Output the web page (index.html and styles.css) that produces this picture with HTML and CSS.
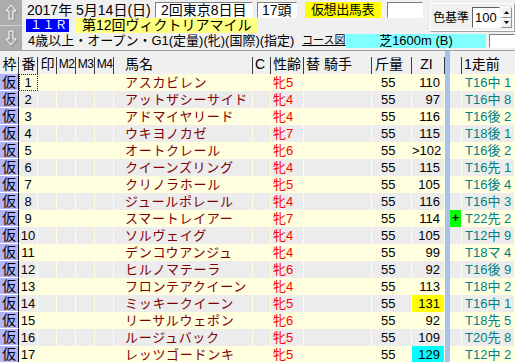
FILE: index.html
```html
<!DOCTYPE html>
<html lang="ja">

<head>
	<meta charset="utf-8">
	<title>仮想出馬表</title>
	<link rel="stylesheet" href="styles.css">
</head>

<body>
	<div id="raceHeader">
		<div class="navButtons">
			<div class="navButton">
				<svg width="14" height="18" viewBox="0 0 14 18">
					<polygon class="arrowShade" points="8,3 13,9 10,9 10,17 6,17 6,9 3,9" />
					<polygon class="arrowEdge" points="7,2 12,8 9,8 9,16 5,16 5,8 2,8" />
				</svg>
			</div>
			<div class="navButton">
				<svg width="14" height="18" viewBox="0 0 14 18">
					<polygon class="arrowShade" points="8,17 13,11 10,11 10,3 6,3 6,11 3,11" />
					<polygon class="arrowEdge" points="7,16 12,10 9,10 9,2 5,2 5,10 2,10" />
				</svg>
			</div>
		</div>
		<div class="raceInfo">
			<div class="infoRow">
				<span class="raceDate">2017年 5月14日(日)</span>
				<span class="box sunken meeting">2回東京8日目</span>
				<span class="box sunken runners">17頭</span>
				<span class="box sheetTitle">仮想出馬表</span>
				<span class="box sunken blank"></span>
			</div>
			<div class="colorPanel">
				<span class="colorLabel">色基準</span>
				<span class="spinValue">100</span>
				<span class="spinButtons">
					<span class="spinButton"><svg width="5" height="3" viewBox="0 0 5 3"><polygon points="2.5,0 5,3 0,3" /></svg></span>
					<span class="spinButton"><svg width="5" height="3" viewBox="0 0 5 3"><polygon points="0,0 5,0 2.5,3" /></svg></span>
				</span>
			</div>
			<div class="infoRow">
				<span class="raceNo">１１Ｒ</span>
				<span class="raceName">第12回ヴィクトリアマイル</span>
			</div>
			<div class="infoRow wide">
				<span class="conditions">4歳以上・オープン・G1(定量)(牝)(国際)(指定)</span>
				<a class="courseLink">コース図</a>
				<span class="course">芝1600m (B)</span>
				<span class="box sunken blankSmall"></span>
			</div>
		</div>
	</div>

	<div id="entryTable">
		<div class="row headRow">
			<span>枠</span><span>番</span><span>印</span><span class="mCol">M2</span><span class="mCol">M3</span><span class="mCol">M4</span>
			<span class="name">馬名</span><span class="cCol">C</span><span class="sexAge">性齢</span><span class="jockey">替 騎手</span>
			<span class="weight">斤量</span><span class="ziHead">ZI</span><span class="bar"></span><span class="mark"></span><span class="last">1走前</span>
		</div>

		<div class="row odd">
			<span class="waku">仮</span><span class="num focused">1</span><span></span><span></span><span></span><span></span>
			<span class="name">アスカビレン</span><span></span><span class="sexAge">牝5</span><span></span>
			<span class="weight">55</span><span class="zi">110</span><span class="bar"></span><span class="mark"></span><span class="last">T16中 1</span>
		</div>
		<div class="row even">
			<span class="waku">仮</span><span class="num">2</span><span></span><span></span><span></span><span></span>
			<span class="name">アットザシーサイド</span><span></span><span class="sexAge">牝4</span><span></span>
			<span class="weight">55</span><span class="zi">97</span><span class="bar"></span><span class="mark"></span><span class="last">T16中 8</span>
		</div>
		<div class="row odd">
			<span class="waku">仮</span><span class="num">3</span><span></span><span></span><span></span><span></span>
			<span class="name">アドマイヤリード</span><span></span><span class="sexAge">牝4</span><span></span>
			<span class="weight">55</span><span class="zi">116</span><span class="bar"></span><span class="mark"></span><span class="last">T16後 2</span>
		</div>
		<div class="row even">
			<span class="waku">仮</span><span class="num">4</span><span></span><span></span><span></span><span></span>
			<span class="name">ウキヨノカゼ</span><span></span><span class="sexAge">牝7</span><span></span>
			<span class="weight">55</span><span class="zi">115</span><span class="bar"></span><span class="mark"></span><span class="last">T18後 1</span>
		</div>
		<div class="row odd">
			<span class="waku">仮</span><span class="num">5</span><span></span><span></span><span></span><span></span>
			<span class="name">オートクレール</span><span></span><span class="sexAge">牝6</span><span></span>
			<span class="weight">55</span><span class="zi">&gt;102</span><span class="bar"></span><span class="mark"></span><span class="last">T16後 2</span>
		</div>
		<div class="row even">
			<span class="waku">仮</span><span class="num">6</span><span></span><span></span><span></span><span></span>
			<span class="name">クイーンズリング</span><span></span><span class="sexAge">牝4</span><span></span>
			<span class="weight">55</span><span class="zi">115</span><span class="bar"></span><span class="mark"></span><span class="last">T16先 1</span>
		</div>
		<div class="row odd">
			<span class="waku">仮</span><span class="num">7</span><span></span><span></span><span></span><span></span>
			<span class="name">クリノラホール</span><span></span><span class="sexAge">牝5</span><span></span>
			<span class="weight">55</span><span class="zi">105</span><span class="bar"></span><span class="mark"></span><span class="last">T16後 4</span>
		</div>
		<div class="row even">
			<span class="waku">仮</span><span class="num">8</span><span></span><span></span><span></span><span></span>
			<span class="name">ジュールポレール</span><span></span><span class="sexAge">牝4</span><span></span>
			<span class="weight">55</span><span class="zi">116</span><span class="bar"></span><span class="mark"></span><span class="last">T16中 3</span>
		</div>
		<div class="row odd">
			<span class="waku">仮</span><span class="num">9</span><span></span><span></span><span></span><span></span>
			<span class="name">スマートレイアー</span><span></span><span class="sexAge">牝7</span><span></span>
			<span class="weight">55</span><span class="zi">114</span><span class="bar"></span><span class="mark plus">+</span><span class="last">T22先 2</span>
		</div>
		<div class="row even">
			<span class="waku">仮</span><span class="num">10</span><span></span><span></span><span></span><span></span>
			<span class="name">ソルヴェイグ</span><span></span><span class="sexAge">牝4</span><span></span>
			<span class="weight">55</span><span class="zi">105</span><span class="bar"></span><span class="mark"></span><span class="last">T12中 9</span>
		</div>
		<div class="row odd">
			<span class="waku">仮</span><span class="num">11</span><span></span><span></span><span></span><span></span>
			<span class="name">デンコウアンジュ</span><span></span><span class="sexAge">牝4</span><span></span>
			<span class="weight">55</span><span class="zi">99</span><span class="bar"></span><span class="mark"></span><span class="last">T18マ 4</span>
		</div>
		<div class="row even">
			<span class="waku">仮</span><span class="num">12</span><span></span><span></span><span></span><span></span>
			<span class="name">ヒルノマテーラ</span><span></span><span class="sexAge">牝6</span><span></span>
			<span class="weight">55</span><span class="zi">92</span><span class="bar"></span><span class="mark"></span><span class="last">T16後 9</span>
		</div>
		<div class="row odd">
			<span class="waku">仮</span><span class="num">13</span><span></span><span></span><span></span><span></span>
			<span class="name">フロンテアクイーン</span><span></span><span class="sexAge">牝4</span><span></span>
			<span class="weight">55</span><span class="zi">113</span><span class="bar"></span><span class="mark"></span><span class="last">T18中 2</span>
		</div>
		<div class="row even">
			<span class="waku">仮</span><span class="num">14</span><span></span><span></span><span></span><span></span>
			<span class="name">ミッキークイーン</span><span></span><span class="sexAge">牝5</span><span></span>
			<span class="weight">55</span><span class="zi topYellow">131</span><span class="bar"></span><span class="mark"></span><span class="last">T16中 1</span>
		</div>
		<div class="row odd">
			<span class="waku">仮</span><span class="num">15</span><span></span><span></span><span></span><span></span>
			<span class="name">リーサルウェポン</span><span></span><span class="sexAge">牝6</span><span></span>
			<span class="weight">55</span><span class="zi">92</span><span class="bar"></span><span class="mark"></span><span class="last">T18先 5</span>
		</div>
		<div class="row even">
			<span class="waku">仮</span><span class="num">16</span><span></span><span></span><span></span><span></span>
			<span class="name">ルージュバック</span><span></span><span class="sexAge">牝5</span><span></span>
			<span class="weight">55</span><span class="zi">109</span><span class="bar"></span><span class="mark"></span><span class="last">T20先 8</span>
		</div>
		<div class="row odd">
			<span class="waku">仮</span><span class="num">17</span><span></span><span></span><span></span><span></span>
			<span class="name">レッツゴードンキ</span><span></span><span class="sexAge">牝5</span><span></span>
			<span class="weight">55</span><span class="zi topCyan">129</span><span class="bar"></span><span class="mark"></span><span class="last">T12中 2</span>
		</div>
	</div>
</body>

</html>
```

FILE: styles.css
```css
html,
body {
	margin: 0;
	overflow: hidden;
}

body {
	width: 515px;
	background: #f0f0f0;
	color: #000;
	font-family: "Liberation Sans", "Noto Sans CJK JP", sans-serif;
}

/* top panel */

#raceHeader {
	display: flex;
	height: 50px;
	border-bottom: 1px solid #a0a0a0;
}

.navButtons {
	width: 22px;
	display: flex;
	flex-direction: column;
}

.navButton {
	flex: 1;
	display: flex;
	align-items: center;
	justify-content: center;
	background: #acacac;
}

.navButton + .navButton {
	border-top: 1px solid #d4d4d4;
}

.arrowEdge {
	fill: none;
	stroke: #fff;
	stroke-width: 1;
}

.arrowShade {
	fill: none;
	stroke: #888;
	stroke-width: 1;
}

.raceInfo {
	flex: 1;
	margin-left: 4px;
	padding-top: 1px;
	display: grid;
	grid-template-columns: 404px 1fr;
	grid-template-rows: 17px 15px 15px;
}

.infoRow {
	display: flex;
	align-items: center;
	white-space: nowrap;
}

.infoRow.wide {
	grid-column: 1 / 3;
}

.box {
	box-sizing: border-box;
	height: 16px;
	line-height: 14px;
	font-size: 14px;
	border: 1px solid transparent;
}

.sunken {
	background: #fff;
	border-color: #808080 #fff #fff #808080;
}

.raceDate {
	width: 128px;
	margin-left: 1px;
	font-size: 14px;
	line-height: 16px;
}

.meeting {
	width: 98px;
	padding-left: 5px;
}

.runners {
	width: 40px;
	margin-left: 4px;
	padding-left: 4px;
}

.sheetTitle {
	width: 76px;
	margin-left: 8px;
	padding-left: 5px;
	background: #ffff00;
	font-size: 13px;
	letter-spacing: -0.4px;
}

.blank {
	width: 36px;
	margin-left: 6px;
}

.colorPanel {
	grid-column: 2;
	grid-row: 1 / 3;
	margin: 2px 0 1px 0;
	display: flex;
	align-items: center;
	white-space: nowrap;
	border: 1px solid;
	border-color: #fff #a0a0a0 #a0a0a0 #fff;
	box-shadow: inset -1px -1px 0 #fff;
}

.colorLabel {
	flex-shrink: 0;
	margin-left: 2px;
	font-size: 12px;
	line-height: 14px;
}

.spinValue {
	flex-shrink: 0;
	box-sizing: border-box;
	width: 28px;
	height: 21px;
	margin-left: 3px;
	padding-left: 2px;
	background: #fff;
	border: 1px solid;
	border-color: #606060 #fff #fff #606060;
	font-size: 13px;
	line-height: 19px;
}

.spinButtons {
	flex-shrink: 0;
	display: flex;
	flex-direction: column;
	height: 21px;
	margin-left: 1px;
}

.spinButton {
	flex: 1;
	box-sizing: border-box;
	width: 11px;
	display: flex;
	align-items: center;
	justify-content: center;
	border: 1px solid;
	border-color: #fff #909090 #909090 #fff;
	fill: #000;
}

.raceNo {
	box-sizing: border-box;
	width: 43px;
	height: 13px;
	padding-left: 4px;
	background: #0000ff;
	color: #fff;
	font-size: 12px;
	line-height: 13px;
	letter-spacing: 0.5px;
}

.raceName {
	box-sizing: border-box;
	width: 183px;
	height: 15px;
	margin-left: 6px;
	padding-left: 7px;
	background: #ffff80;
	font-size: 14px;
	line-height: 15px;
}

.conditions {
	width: 274px;
	margin-left: 2px;
	font-size: 13px;
	line-height: 14px;
}

.courseLink {
	width: 44px;
	font-size: 11px;
	line-height: 13px;
	text-decoration: underline;
}

.course {
	width: 140px;
	height: 14px;
	background: #80ffff;
	text-align: center;
	font-size: 13px;
	line-height: 14px;
}

.blankSmall {
	width: 26px;
	height: 14px;
	margin-left: 3px;
}

/* entry grid */

.row {
	display: grid;
	grid-template-columns: 19px 19px 19px 19px 19px 19px 139px 18px 33px 68px 40px 33px 5px 12px 53px;
	height: 17px;
}

.row span {
	box-sizing: border-box;
	height: 17px;
	overflow: hidden;
	white-space: nowrap;
	font-size: 13px;
	line-height: 17px;
	border-right: 1px solid #ffffe0;
}

.row.odd {
	background: #ffffe0;
}

.row.even {
	background: #ececec;
}

.headRow {
	height: 23px;
	background: #f0f0f0;
}

.headRow span {
	height: 23px;
	padding-top: 5px;
	font-size: 14px;
	text-align: center;
	border-right: none;
	background: linear-gradient(#3c3c3c, #3c3c3c) right bottom / 1px 17px no-repeat;
}

.headRow span.mCol {
	font-size: 12px;
	letter-spacing: -0.5px;
}

.headRow span.name {
	padding-left: 16px;
	text-align: left;
}

.headRow span.cCol,
.headRow span.sexAge,
.headRow span.jockey,
.headRow span.weight {
	padding-left: 2px;
	text-align: left;
}

.headRow span.weight {
	padding-left: 3px;
}

.headRow span.ziHead {
	padding-right: 4px;
}

.headRow span.last {
	padding-left: 2px;
	text-align: left;
	background: none;
}

.waku {
	text-align: center;
	font-size: 14px;
	background: #b4b4f8;
	border-bottom: 1px solid #fff;
}

.row span.waku {
	font-size: 14px;
	border-right: 1px solid #000;
}

.num {
	text-align: center;
}

.focused {
	outline: 1px dotted #800000;
	outline-offset: -1px;
}

.row span.name {
	padding-left: 11px;
	color: #800000;
	letter-spacing: 0.7px;
}

.headRow span.name {
	color: #000;
	letter-spacing: 0;
}

.sexAge {
	padding-left: 2px;
	color: #ff0000;
}

.headRow span.sexAge {
	color: #000;
}

.weight {
	padding-left: 9px;
}

.zi {
	padding-right: 4px;
	text-align: right;
}

.topYellow {
	background: #ffff00;
}

.topCyan {
	background: #00ffff;
}

.row span.bar,
.headRow span.bar {
	background: #a4c4ec;
	border-right: none;
}

.mark {
	text-align: center;
}

.row span.plus {
	background: #00ff00;
	font-weight: bold;
	line-height: 16px;
}

.last {
	padding-left: 3px;
	color: #008080;
}

.headRow span.last {
	color: #000;
}
```
